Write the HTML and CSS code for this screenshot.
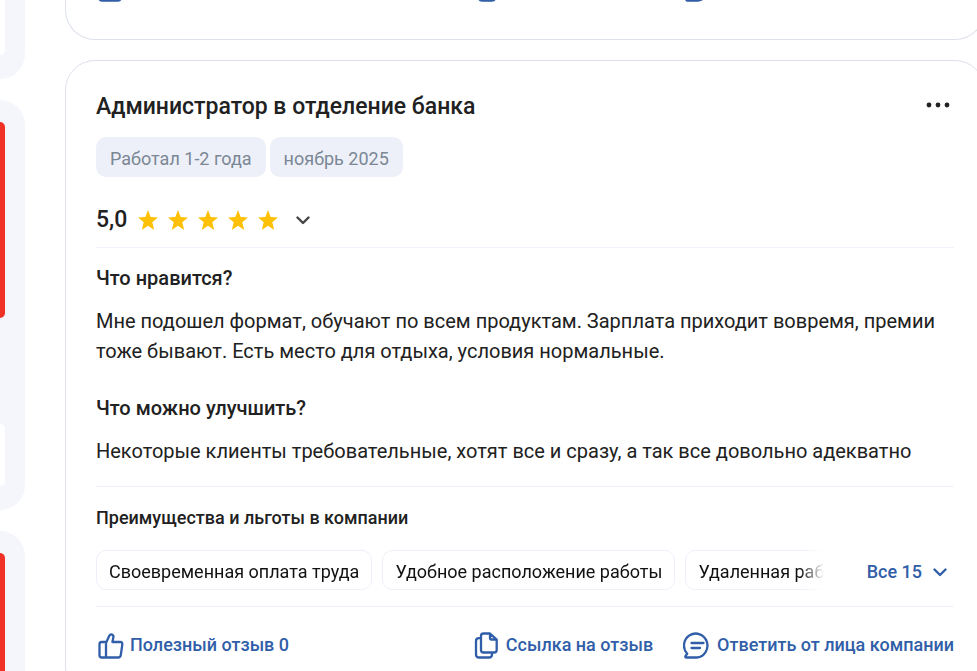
FILE: index.html
```html
<!DOCTYPE html>
<html lang="ru">
<head>
<meta charset="utf-8">
<meta name="viewport" content="width=device-width, initial-scale=1">
<title>Отзывы о компании</title>
<link rel="stylesheet" href="styles.css">
</head>
<body>
<svg class="sprite" aria-hidden="true">
  <symbol id="like" viewBox="0 0 28 28"><path d="M3.500 13.300q0-2.300 2.300-2.300h4.200v15.500h-4.200q-2.300 0-2.300-2.300zM10 12l3.400-7.400q1-1.700 2.600-1 1.800.8 1.400 2.700l-1 4.700h7.900q2.300 0 2 2.400l-1.500 10.700q-.4 2.400-2.700 2.400H10"/></symbol>
  <symbol id="copy" viewBox="0 0 28 28"><path d="M8.500 7.200H7Q4 7.200 4 10.200v13.300q0 3 3 3h10q3 0 3-3v-1.500M18 2.500h-6.500Q9 2.500 9 5v14q0 2.500 2.500 2.500h10.700q2.500 0 2.500-2.500V8.700zM18 3v4q0 1.500 1.500 1.500H24"/></symbol>
  <symbol id="reply" viewBox="0 0 28 28"><path d="M14 26.500H3q-1.200-.7-.3-1.800l1.500-1.900A11.700 12 0 1 1 14 26.500zM8.500 12h12M8.500 17H17"/></symbol>
  <symbol id="star" viewBox="0 0 20 20"><path d="M10 0l2.700 7.100 7.300.5-5.700 4.700L16.200 20 10 15.700 3.800 20l1.900-7.700L0 7.600l7.300-.5z"/></symbol>
  <symbol id="chevron" viewBox="0 0 14 9"><path d="M1.500 1.500L7 7l5.500-5.500"/></symbol>
</svg>
<div class="page">
  <aside class="sidebar" aria-label="Вакансии">
    <div class="panel panel-first"><div class="tile"></div></div>
    <div class="panel"><div class="banner"></div><div class="tile"></div></div>
    <div class="panel"><div class="banner"></div><div class="tile"></div></div>
  </aside>
  <main class="feed">
    <article class="card card-previous">
      <footer class="actions">
        <button class="action" type="button" aria-label="Полезный отзыв"><svg class="icon"><use href="#like"/></svg></button>
        <button class="action push link" type="button" aria-label="Ссылка на отзыв"><svg class="icon"><use href="#copy"/></svg></button>
        <button class="action reply" type="button" aria-label="Ответить от лица компании"><svg class="icon"><use href="#reply"/></svg></button>
      </footer>
    </article>
    <article class="card">
      <header class="heading">
        <h2 class="title">Администратор в отделение банка</h2>
        <button class="more" type="button" aria-label="Ещё"><svg class="dots" viewBox="0 0 24 6"><circle cx="3" cy="3" r="2.400"/><circle cx="12" cy="3" r="2.400"/><circle cx="21" cy="3" r="2.400"/></svg></button>
      </header>
      <div class="tags"><span class="tag">Работал 1-2 года</span><span class="tag">ноябрь 2025</span></div>
      <div class="rating">
        <span class="score">5,0</span>
        <span class="stars" role="img" aria-label="5 из 5"><svg class="star"><use href="#star"/></svg><svg class="star"><use href="#star"/></svg><svg class="star"><use href="#star"/></svg><svg class="star"><use href="#star"/></svg><svg class="star"><use href="#star"/></svg></span>
        <button class="expand" type="button" aria-label="Показать оценки"><svg class="chevron"><use href="#chevron"/></svg></button>
      </div>
      <section class="review">
        <h3 class="question">Что нравится?</h3>
        <p class="answer">Мне подошел формат, обучают по всем продуктам. Зарплата приходит вовремя, премии тоже бывают. Есть место для отдыха, условия нормальные.</p>
        <h3 class="question">Что можно улучшить?</h3>
        <p class="answer">Некоторые клиенты требовательные, хотят все и сразу, а так все довольно адекватно</p>
      </section>
      <section class="benefits">
        <h3 class="subtitle">Преимущества и льготы в компании</h3>
        <div class="benefit-row">
          <ul class="chips"><li class="chip">Своевременная оплата труда</li><li class="chip">Удобное расположение работы</li><li class="chip">Удаленная работа</li></ul>
          <button class="all" type="button">Все 15<svg class="chevron"><use href="#chevron"/></svg></button>
        </div>
      </section>
      <footer class="actions">
        <button class="action" type="button"><svg class="icon"><use href="#like"/></svg>Полезный отзыв 0</button>
        <button class="action push" type="button"><svg class="icon"><use href="#copy"/></svg>Ссылка на отзыв</button>
        <button class="action" type="button"><svg class="icon"><use href="#reply"/></svg>Ответить от лица компании</button>
      </footer>
    </article>
  </main>
</div>
</body>
</html>
```
FILE: styles.css
```css
* { box-sizing: border-box; }
body { margin: 0; height: 100vh; overflow: hidden; background: #fff; color: #212121; font-family: Roboto, "Noto Sans", sans-serif; font-size: 20px; line-height: 30px; }
h2, h3, p, ul { margin: 0; padding: 0; }
button { border: 0; padding: 0; background: none; color: inherit; font: inherit; cursor: pointer; }
svg { display: block; flex: none; fill: none; stroke: currentColor; stroke-linecap: round; stroke-linejoin: round; }
.sprite { position: absolute; width: 0; height: 0; }

/* The feed runs slightly past the right edge of a narrow window. */
.page { display: grid; grid-template-columns: 25px minmax(0, 1fr); column-gap: 40px; margin-right: -8px; }

.sidebar { display: flex; flex-direction: column; gap: 21px; }
.panel { padding: 22px 20px 24px 0; background: #f4f6fc; border-radius: 0 30px 30px 0; }
.panel-first { padding-top: 0; border-top-right-radius: 0; }
.panel-first .tile { height: 55px; border-top-right-radius: 0; }
.banner { height: 196px; background: #f03226; border-radius: 0 12px 12px 0; }
.banner + .tile { margin-top: 106px; }
.tile { height: 62px; background: #fff; border-radius: 0 12px 12px 0; }

.feed { display: flex; flex-direction: column; gap: 20px; margin-top: -50px; }
.card { padding: 30px 30px 36px; border: 1px solid #dce1ea; border-radius: 30px; }
.card-previous { padding-top: 0; border-top: 0; border-top-left-radius: 0; border-top-right-radius: 0; }
.card-previous .actions { height: 53px; }
.link { width: 179px; }
.reply { width: 270px; }

.heading { display: flex; justify-content: space-between; }
.title { font-size: 23px; line-height: 32px; font-weight: 500; }
.more { display: flex; align-items: center; height: 28px; margin-right: 4px; }
.dots { width: 24px; height: 6px; fill: #212121; stroke: none; }

.tags { display: flex; gap: 4px; margin-top: 14px; }
.tag { padding: 7px 14px 3px; height: 40px; background: #edf0f9; color: #7b8794; border-radius: 10px; font-size: 18px; }

.rating { display: flex; align-items: center; margin-top: 27px; padding-bottom: 11px; border-bottom: 1px solid #f1f3fa; }
.score { font-size: 23px; line-height: 32px; font-weight: 500; }
.stars { display: flex; gap: 10px; margin-left: 11px; }
.star { width: 20px; height: 20px; fill: #ffc107; stroke: none; }
.expand { margin-left: 18px; color: #444; }
.chevron { width: 14px; height: 9px; stroke-width: 2.400px; }

.review { padding: 15px 0 20px; border-bottom: 1px solid #f1f3fa; }
.question { font-size: 20px; font-weight: 500; }
.answer { margin-top: 13px; }
.answer + .question { margin-top: 27px; }

.benefits { padding: 16px 0; border-bottom: 1px solid #f1f3fa; }
.subtitle { font-size: 18px; font-weight: 500; }
.benefit-row { display: flex; align-items: center; gap: 43px; margin-top: 17px; }
.chips { display: flex; flex: 1; min-width: 0; gap: 10px; overflow: hidden; list-style: none; mask-image: linear-gradient(to right, #000 calc(100% - 24px), transparent); }
.chip { flex: none; height: 40px; padding: 5px 12px; border: 1px solid #edf0f9; border-radius: 10px; color: #111; font-size: 18px; line-height: 32px; }
.all { display: flex; align-items: center; gap: 11px; height: 40px; padding-top: 4px; margin-right: 7px; color: #315ea8; font-size: 18px; font-weight: 500; }

.actions { display: flex; gap: 30px; padding-top: 23px; }
.action { display: flex; align-items: center; gap: 6px; color: #315ea8; font-size: 18px; font-weight: 500; }
.push { margin-left: auto; }
.icon { width: 28px; height: 28px; stroke-width: 2.300px; }
```
